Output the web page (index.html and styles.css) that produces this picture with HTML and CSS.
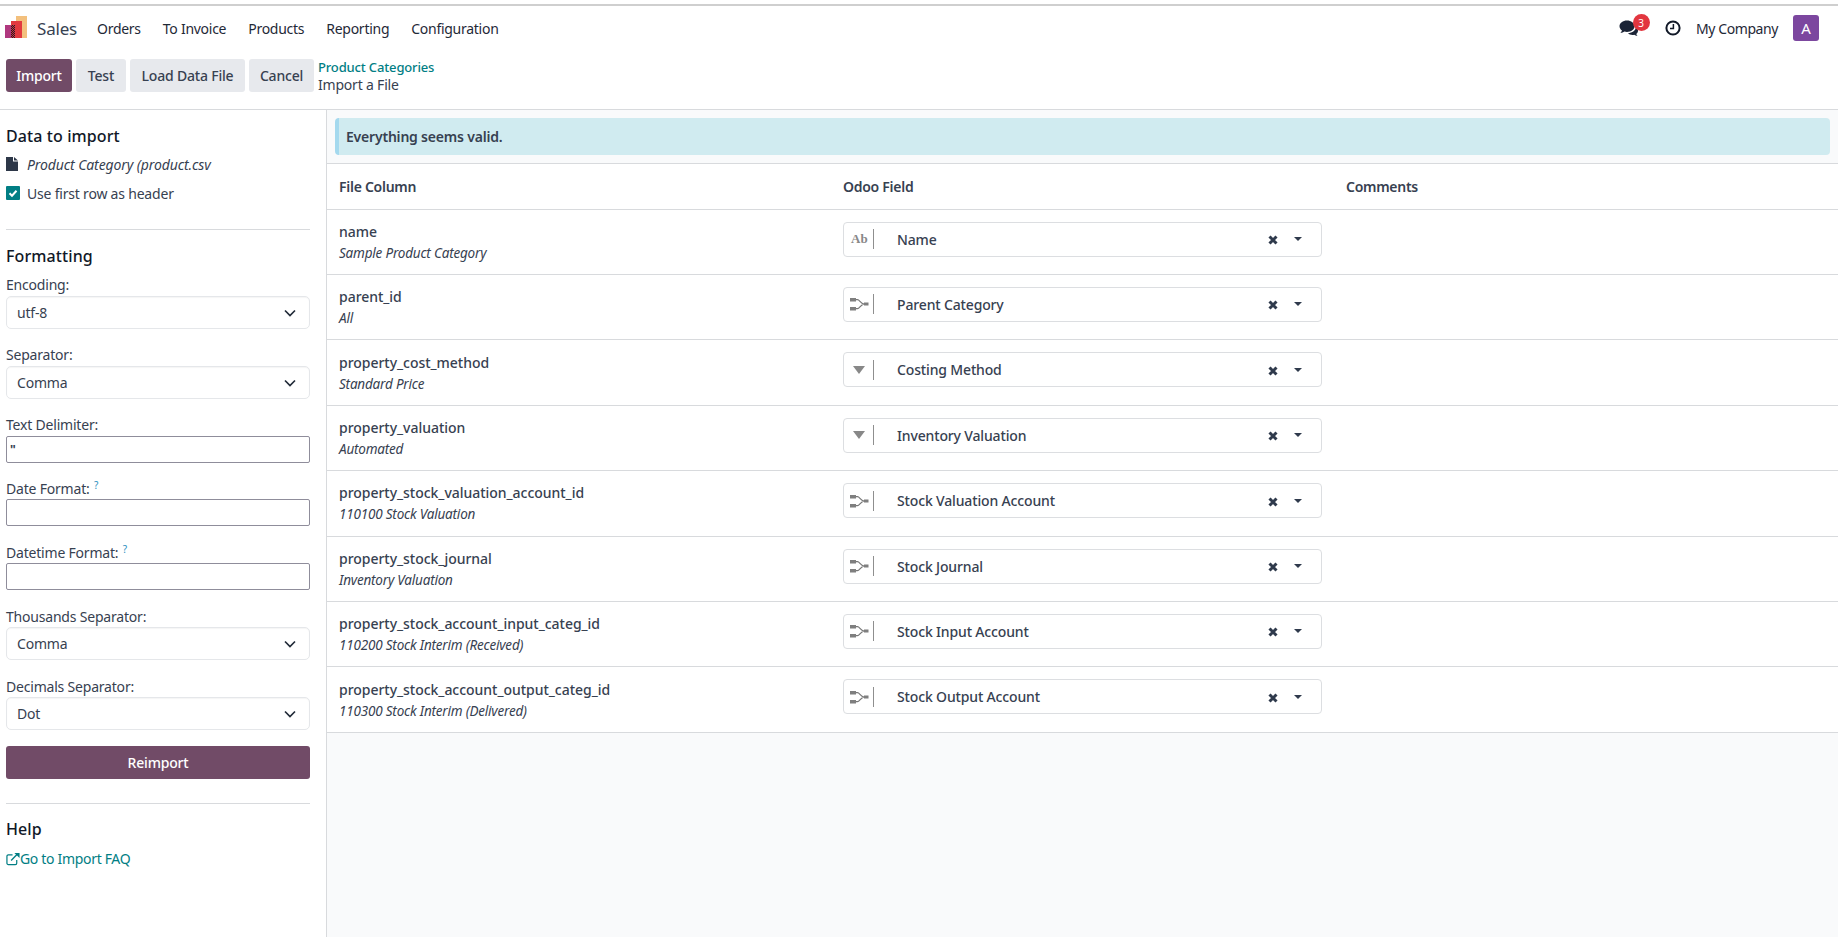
FILE: index.html
```html
<!DOCTYPE html>
<html lang="en">
<head>
<meta charset="utf-8">
<title>Import a File</title>
<link rel="stylesheet" href="styles.css">
</head>
<body>
<svg class="defs" width="0" height="0" aria-hidden="true">
  <defs>
    <pattern id="dither" width="2" height="2" patternUnits="userSpaceOnUse">
      <rect width="2" height="2" fill="#c8353f"/>
      <rect width="1" height="1" fill="#2a1a24"/>
      <rect x="1" y="1" width="1" height="1" fill="#2a1a24"/>
    </pattern>
  </defs>
  <symbol id="rel" viewBox="0 0 19 14">
    <rect x="0" y="1" width="6" height="3.500"/>
    <rect x="0" y="10" width="6" height="3.500"/>
    <rect x="14" y="5.500" width="4.500" height="3"/>
    <path d="M6 2.700h1.500c2 0 3 3.600 6.500 4.300-3.500.8-4.500 4.700-6.500 4.700H6" fill="none" stroke="#777" stroke-width="1.200"/>
  </symbol>
  <symbol id="times" viewBox="0 0 10 10">
    <path d="M1.500 1.500 8.500 8.500M8.500 1.500 1.500 8.500" fill="none" stroke="#2f3a4c" stroke-width="3"/>
  </symbol>
  <symbol id="chev" viewBox="0 0 14 14">
    <path d="M2 4.500 7 9.500 12 4.500" fill="none" stroke="currentColor" stroke-width="1.700"/>
  </symbol>
</svg>

<header class="topbar">
  <nav class="menu">
    <svg class="logo" viewBox="0 0 22 22" width="22" height="22">
      <rect x="11" y="0" width="11" height="22" fill="#f3c07d"/>
      <rect x="6" y="5" width="11" height="17" fill="#e2393f"/>
      <rect x="0" y="9" width="10" height="13" fill="#b0387f"/>
      <rect x="6" y="9" width="4" height="13" fill="url(#dither)"/>
    </svg>
    <span class="brand">Sales</span>
    <a class="menu-item">Orders</a>
    <a class="menu-item">To Invoice</a>
    <a class="menu-item">Products</a>
    <a class="menu-item">Reporting</a>
    <a class="menu-item">Configuration</a>
  </nav>
  <div class="systray">
    <span class="chat">
      <svg viewBox="0 0 20 16" width="20" height="16">
        <path d="M8 0.500C3.800 0.500 0.500 3 0.500 6.200c0 1.700 1 3.200 2.500 4.300-.3 1-.9 1.800-1.600 2.600 1.500-.2 3-.8 4-1.500.8.200 1.700.3 2.600.3 4.200 0 7.500-2.600 7.500-5.700S12.200.5 8 .5Z"/>
        <path d="M17 6.800c0 3.600-3.700 6.200-8 6.400 1 1.100 2.700 1.700 4.500 1.700.6 0 1.200 0 1.700-.2.800.6 2 1 3.300 1.200-.6-.6-1-1.300-1.200-2 1.100-.8 1.700-1.900 1.700-3.100 0-1.700-.8-3-2-4Z"/>
      </svg>
      <span class="badge">3</span>
    </span>
    <svg class="clock" viewBox="0 0 16 16" width="16" height="16">
      <circle cx="8" cy="8" r="6.600" fill="none" stroke="currentColor" stroke-width="2"/>
      <path d="M8.400 4v4.500H5" fill="none" stroke="currentColor" stroke-width="1.500"/>
    </svg>
    <span class="company">My Company</span>
    <span class="avatar">A</span>
  </div>
</header>

<section class="control">
  <div class="btns">
    <button class="btn primary w-import">Import</button>
    <button class="btn w-test">Test</button>
    <button class="btn w-load">Load Data File</button>
    <button class="btn w-cancel">Cancel</button>
  </div>
  <div class="crumbs">
    <a class="crumb-link">Product Categories</a>
    <span class="crumb-here">Import a File</span>
  </div>
</section>

<main class="layout">
  <aside class="side">
    <h2 class="side-title first">Data to import</h2>
    <div class="file-row">
      <svg viewBox="0 0 12 14" width="12" height="14"><path d="M0 0h7v4.500h5V14H0ZM8 0l4 3.500H8Z"/></svg>
      <em>Product Category (product.csv</em>
    </div>
    <label class="check-row">
      <span class="check"><svg viewBox="0 0 14 14" width="14" height="14"><path d="M3.500 7.200 6 9.700 10.500 4.800" fill="none" stroke="#fff" stroke-width="2"/></svg></span>
      Use first row as header
    </label>
    <hr class="rule rule-a">
    <h2 class="side-title">Formatting</h2>

    <label class="lab l0">Encoding:</label>
    <div class="sel">utf-8<svg width="14" height="14"><use href="#chev"/></svg></div>
    <label class="lab">Separator:</label>
    <div class="sel">Comma<svg width="14" height="14"><use href="#chev"/></svg></div>
    <label class="lab">Text Delimiter:</label>
    <input class="inp delim" value="&quot;">
    <label class="lab low tight">Date Format: <sup class="hint">?</sup></label>
    <input class="inp">
    <label class="lab low">Datetime Format: <sup class="hint">?</sup></label>
    <input class="inp">
    <label class="lab low">Thousands Separator:</label>
    <div class="sel">Comma<svg width="14" height="14"><use href="#chev"/></svg></div>
    <label class="lab low">Decimals Separator:</label>
    <div class="sel">Dot<svg width="14" height="14"><use href="#chev"/></svg></div>

    <button class="btn primary reimport">Reimport</button>
    <hr class="rule rule-b">
    <h2 class="side-title">Help</h2>
    <a class="faq">
      <svg viewBox="0 0 15 14" width="14" height="14"><path d="M11.500 8v3.500A1.500 1.500 0 0 1 10 13H2.500A1.500 1.500 0 0 1 1 11.500V4A1.500 1.500 0 0 1 2.500 2.500H7" fill="none" stroke="currentColor" stroke-width="1.300"/><path d="M5.500 8.500 12 2" fill="none" stroke="currentColor" stroke-width="1.500"/><path d="M9 0.500h5.500V6Z"/></svg>Go to Import FAQ
    </a>
  </aside>

  <div class="content">
    <div class="alert-wrap"><div class="alert">Everything seems valid.</div></div>
    <div class="table">
      <div class="row head"><div>File Column</div><div>Odoo Field</div><div>Comments</div></div>

      <div class="row">
        <div class="cell"><b>name</b><i>Sample Product Category</i></div>
        <div class="field"><span class="ftype serif">Ab</span><span class="fname">Name</span><svg class="x"><use href="#times"/></svg><span class="caret"></span></div>
      </div>
      <div class="row">
        <div class="cell"><b>parent_id</b><i>All</i></div>
        <div class="field"><span class="ftype"><svg width="19" height="14"><use href="#rel"/></svg></span><span class="fname">Parent Category</span><svg class="x"><use href="#times"/></svg><span class="caret"></span></div>
      </div>
      <div class="row">
        <div class="cell"><b>property_cost_method</b><i>Standard Price</i></div>
        <div class="field"><span class="ftype"><span class="tri"></span></span><span class="fname">Costing Method</span><svg class="x"><use href="#times"/></svg><span class="caret"></span></div>
      </div>
      <div class="row">
        <div class="cell"><b>property_valuation</b><i>Automated</i></div>
        <div class="field"><span class="ftype"><span class="tri"></span></span><span class="fname">Inventory Valuation</span><svg class="x"><use href="#times"/></svg><span class="caret"></span></div>
      </div>
      <div class="row">
        <div class="cell"><b>property_stock_valuation_account_id</b><i>110100 Stock Valuation</i></div>
        <div class="field"><span class="ftype"><svg width="19" height="14"><use href="#rel"/></svg></span><span class="fname">Stock Valuation Account</span><svg class="x"><use href="#times"/></svg><span class="caret"></span></div>
      </div>
      <div class="row">
        <div class="cell"><b>property_stock_journal</b><i>Inventory Valuation</i></div>
        <div class="field"><span class="ftype"><svg width="19" height="14"><use href="#rel"/></svg></span><span class="fname">Stock Journal</span><svg class="x"><use href="#times"/></svg><span class="caret"></span></div>
      </div>
      <div class="row">
        <div class="cell"><b>property_stock_account_input_categ_id</b><i>110200 Stock Interim (Received)</i></div>
        <div class="field"><span class="ftype"><svg width="19" height="14"><use href="#rel"/></svg></span><span class="fname">Stock Input Account</span><svg class="x"><use href="#times"/></svg><span class="caret"></span></div>
      </div>
      <div class="row">
        <div class="cell"><b>property_stock_account_output_categ_id</b><i>110300 Stock Interim (Delivered)</i></div>
        <div class="field"><span class="ftype"><svg width="19" height="14"><use href="#rel"/></svg></span><span class="fname">Stock Output Account</span><svg class="x"><use href="#times"/></svg><span class="caret"></span></div>
      </div>
    </div>
  </div>
</main>
</body>
</html>
```
FILE: styles.css
```css
* { box-sizing: border-box; }
html, body { height: 100%; }
body {
  margin: 0;
  padding-top: 4px;
  height: 937px;
  overflow: hidden;
  display: flex;
  flex-direction: column;
  background: #fff;
  color: #374151;
  font-family: "Noto Sans", sans-serif;
  font-size: 14px;
  letter-spacing: -0.2px;
}
.defs { position: absolute; }
a { color: inherit; }

.topbar {
  height: 46px;
  flex: none;
  border-top: 2px solid #cfcfcf;
  display: flex;
  align-items: center;
  justify-content: space-between;
}
.menu { display: flex; align-items: center; padding-left: 5px; }
.logo { margin-right: 10px; margin-top: -2px; }
.brand { font-size: 17px; margin-right: 20px; }
.menu-item { margin-right: 22px; color: #1f2937; letter-spacing: -0.27px; }
.systray { display: flex; align-items: center; padding-right: 19px; color: #111827; }
.chat { position: relative; width: 20px; height: 16px; margin-right: 26px; fill: #1b2436; display: flex; }
.badge {
  position: absolute; left: 13.5px; top: -6px;
  width: 17px; height: 17px; border-radius: 50%;
  background: #e2363f; color: #fff;
  font-size: 10px; display: flex; align-items: center; justify-content: center;
}
.clock { margin-right: 15px; }
.company { color: #1f2937; margin-right: 15px; letter-spacing: -0.42px; }
.avatar {
  width: 26px; height: 26px; border-radius: 3px;
  background: #7c479f; color: #fff;
  font-size: 15px; display: flex; align-items: center; justify-content: center;
}

.control {
  height: 60px;
  flex: none;
  border-bottom: 1px solid #d8dadd;
  display: flex;
  align-items: flex-start;
  padding: 9px 0 0 6px;
  gap: 4px;
}
.btns { display: flex; gap: 4px; }
.btn {
  height: 33px;
  border: 0;
  border-radius: 3px;
  padding: 0;
  background: #e7e9ed;
  color: #374151;
  font: 500 14px "Noto Sans", sans-serif;
  letter-spacing: -0.2px;
}
.w-import { width: 66px; }
.w-test { width: 50px; }
.w-load { width: 115px; }
.w-cancel { width: 65px; }
.btn.primary { background: #714b67; color: #fff; }
.crumbs { display: flex; flex-direction: column; line-height: 18px; margin-top: -1px; }
.crumb-link { color: #017e84; font-weight: 500; font-size: 13px; letter-spacing: -0.15px; }
.crumb-here { color: #374151; }

.layout { flex: 1; display: flex; min-height: 0; }
.side {
  width: 327px;
  flex: none;
  border-right: 1px solid #d8dadd;
  padding: 0 16px 0 6px;
  display: flex;
  flex-direction: column;
}
.side-title {
  margin: 0;
  font-size: 16px;
  line-height: 22px;
  font-weight: 500;
  color: #111827;
  letter-spacing: 0.1px;
}
.side-title.first { margin-top: 15px; }
.file-row { display: flex; align-items: center; gap: 9px; margin-top: 7px; height: 20px; fill: #2d3748; letter-spacing: -0.1px; }
.check-row { display: flex; align-items: center; gap: 7px; margin-top: 9px; height: 20px; }
.check { width: 14px; height: 14px; border-radius: 1px; background: #017e84; display: flex; }
.rule { width: 100%; margin: 0; border: 0; border-top: 1px solid #d8dadd; }
.rule-a { margin-top: 26px; margin-bottom: 15px; }
.rule-b { margin-top: 24px; margin-bottom: 14px; }
.lab { display: block; height: 18px; line-height: 18px; margin-top: 17px; margin-bottom: 2px; white-space: nowrap; }
.lab.l0 { margin-top: 9px; }
.lab.low { margin-top: 18px; margin-bottom: 1px; }
.lab.low.tight { margin-top: 17px; }
.hint { color: #2c8fc0; font-size: 10px; line-height: 0; vertical-align: 5px; margin-left: 1px; }
.sel {
  height: 33px;
  flex: none;
  border: 1px solid #e5e7ea;
  border-radius: 5px;
  padding: 0 10px;
  display: flex;
  align-items: center;
  justify-content: space-between;
  box-shadow: inset 0 1px 1px #0000000a;
}
.sel svg { color: #222b38; margin-right: 2px; }
.inp {
  display: block;
  width: 100%;
  height: 27px;
  flex: none;
  border: 1px solid #8f8d9b;
  border-radius: 2px;
  padding: 0 3px;
  color: #374151;
  font: 12px "Noto Sans", sans-serif;
  outline: 0;
}
.delim { font-weight: 700; }
.reimport { width: 100%; margin-top: 16px; flex: none; }
.faq { display: flex; align-items: flex-start; color: #017e84; margin-top: 9px; height: 20px; line-height: 20px; fill: #017e84; letter-spacing: -0.32px; }
.faq svg { margin-top: 3px; }

.content { flex: 1; min-width: 0; background: #f9fafb; }
.alert-wrap { height: 54px; padding: 8px 8px 0; border-bottom: 1px solid #d8dadd; }
.alert {
  height: 37px;
  border-left: 4px solid #a4d9ee;
  border-radius: 4px;
  padding-left: 7px;
  background: #d0ebf0;
  font-weight: 600;
  display: flex;
  align-items: center;
  color: #374151;
}
.table { background: #fff; }
.row {
  display: grid;
  grid-template-columns: 504px 503px 1fr;
  height: 65.4px;
  border-bottom: 1px solid #d8dadd;
  align-items: center;
  padding-left: 12px;
}
.row.head { height: 45.6px; font-weight: 600; letter-spacing: -0.27px; }
.cell { display: flex; flex-direction: column; line-height: 20px; padding-top: 2px; }
.cell b { font-weight: 500; letter-spacing: -0.03px; }
.cell i { font-size: 13.5px; line-height: 21px; margin-top: 1px; letter-spacing: -0.2px; color: #374151; }
.field {
  width: 479px;
  height: 35px;
  align-self: start;
  margin-top: 12px;
  border: 1px solid #dcdee1;
  border-radius: 4px;
  display: flex;
  align-items: center;
  padding-left: 6px;
}
.ftype {
  width: 24px;
  height: 20px;
  border-right: 1px solid #8f8f8f;
  color: #888;
  fill: #7f7f7f;
  display: flex;
  align-items: center;
  margin-right: 23px;
  flex: none;
}
.serif { font: 700 13px "Liberation Serif", serif; letter-spacing: 0; padding-left: 1px; }
.tri { width: 0; height: 0; margin-left: 3px; border: 6px solid transparent; border-top: 8px solid #888; border-bottom: 0; }
.fname { flex: 1; font-weight: 500; letter-spacing: -0.15px; }
.x { width: 10px; height: 10px; margin-right: 16px; margin-top: 2px; }
.caret { width: 0; height: 0; margin-right: 19px; border: 4.5px solid transparent; border-top: 4.5px solid #2f3a4c; border-bottom: 0; }
```
